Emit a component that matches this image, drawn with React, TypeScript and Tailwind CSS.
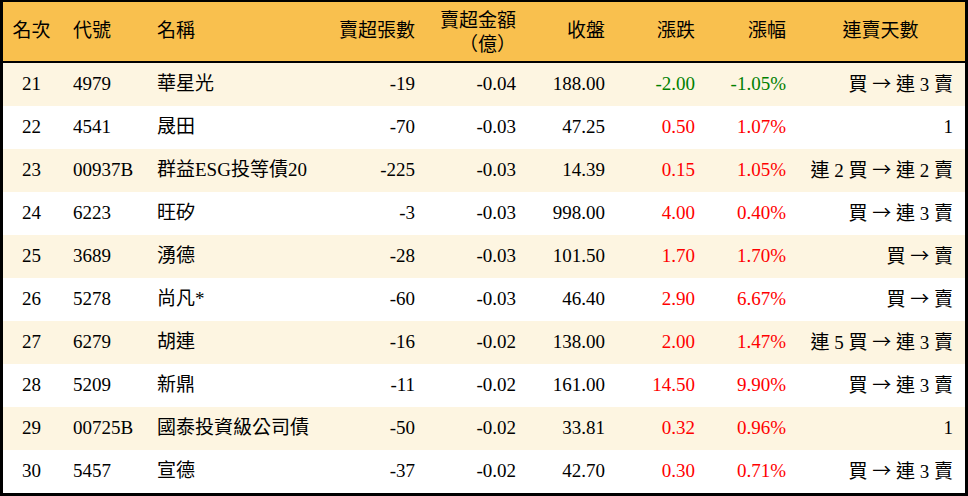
import React from 'react';

type Row = {
  rank: number;
  code: string;
  name: string;
  lots: string;
  amount: string;
  close: string;
  change: string;
  pct: string;
  streak: string;
};

const rows: Row[] = [
  { rank: 21, code: '4979', name: '華星光', lots: '-19', amount: '-0.04', close: '188.00', change: '-2.00', pct: '-1.05%', streak: '買 → 連 3 賣' },
  { rank: 22, code: '4541', name: '晟田', lots: '-70', amount: '-0.03', close: '47.25', change: '0.50', pct: '1.07%', streak: '1' },
  { rank: 23, code: '00937B', name: '群益ESG投等債20', lots: '-225', amount: '-0.03', close: '14.39', change: '0.15', pct: '1.05%', streak: '連 2 買 → 連 2 賣' },
  { rank: 24, code: '6223', name: '旺矽', lots: '-3', amount: '-0.03', close: '998.00', change: '4.00', pct: '0.40%', streak: '買 → 連 3 賣' },
  { rank: 25, code: '3689', name: '湧德', lots: '-28', amount: '-0.03', close: '101.50', change: '1.70', pct: '1.70%', streak: '買 → 賣' },
  { rank: 26, code: '5278', name: '尚凡*', lots: '-60', amount: '-0.03', close: '46.40', change: '2.90', pct: '6.67%', streak: '買 → 賣' },
  { rank: 27, code: '6279', name: '胡連', lots: '-16', amount: '-0.02', close: '138.00', change: '2.00', pct: '1.47%', streak: '連 5 買 → 連 3 賣' },
  { rank: 28, code: '5209', name: '新鼎', lots: '-11', amount: '-0.02', close: '161.00', change: '14.50', pct: '9.90%', streak: '買 → 連 3 賣' },
  { rank: 29, code: '00725B', name: '國泰投資級公司債', lots: '-50', amount: '-0.02', close: '33.81', change: '0.32', pct: '0.96%', streak: '1' },
  { rank: 30, code: '5457', name: '宣德', lots: '-37', amount: '-0.02', close: '42.70', change: '0.30', pct: '0.71%', streak: '買 → 連 3 賣' },
];

const cols = 'grid grid-cols-[57px_87px_173px_105px_101px_89px_90px_91px_169px]';

// the arrow looks wider in the original, so take it from the CJK font
function Streak({ text }: { text: string }) {
  const parts = text.split('→');
  if (parts.length < 2) return <>{text}</>;
  return (
    <>
      {parts[0]}
      <span style={{ fontFamily: '"Noto Sans CJK TC", sans-serif' }}>→</span>
      {parts[1]}
    </>
  );
}

export default function App() {
  return (
    <div
      className="w-[968px] h-[496px] bg-white text-black text-[19px] border-t-2 border-x-[3px] border-b-[3px] border-black"
      style={{ fontFamily: '"Liberation Serif", "Noto Sans CJK TC", serif' }}
    >
      {/* header */}
      <div className={`${cols} h-[61px] bg-[#f9c04e] border-b-2 border-black items-center`}>
        <div className="text-center">名次</div>
        <div className="pl-[13px]">代號</div>
        <div className="pl-[10px]">名稱</div>
        <div className="pr-[10px] text-right">賣超張數</div>
        <div className="pr-[10px] text-right flex flex-col items-end gap-[2px]">
          <div className="h-[20px] leading-[20px]">賣超金額</div>
          <div className="h-[20px] leading-[20px]" style={{ fontFamily: '"Noto Sans CJK TC", sans-serif' }}>
            （億）
          </div>
        </div>
        <div className="pr-[10px] text-right">收盤</div>
        <div className="pr-[10px] text-right">漲跌</div>
        <div className="pr-[10px] text-right">漲幅</div>
        <div className="text-center">連賣天數</div>
      </div>

      {rows.map((r, i) => {
        const color = r.change.startsWith('-') ? 'text-[#008000]' : 'text-[#ff0000]';
        return (
          <div
            key={r.rank}
            className={`${cols} h-[43px] items-center whitespace-nowrap ${i % 2 === 0 ? 'bg-[#fdf5e1]' : 'bg-white'}`}
          >
            <div className="text-center">{r.rank}</div>
            <div className="pl-[13px]">{r.code}</div>
            <div className="pl-[10px]">{r.name}</div>
            <div className="pr-[10px] text-right">{r.lots}</div>
            <div className="pr-[10px] text-right">{r.amount}</div>
            <div className="pr-[10px] text-right">{r.close}</div>
            <div className={`pr-[10px] text-right ${color}`}>{r.change}</div>
            <div className={`pr-[10px] text-right ${color}`}>{r.pct}</div>
            <div className="pr-[12px] text-right">
              <Streak text={r.streak} />
            </div>
          </div>
        );
      })}
    </div>
  );
}
